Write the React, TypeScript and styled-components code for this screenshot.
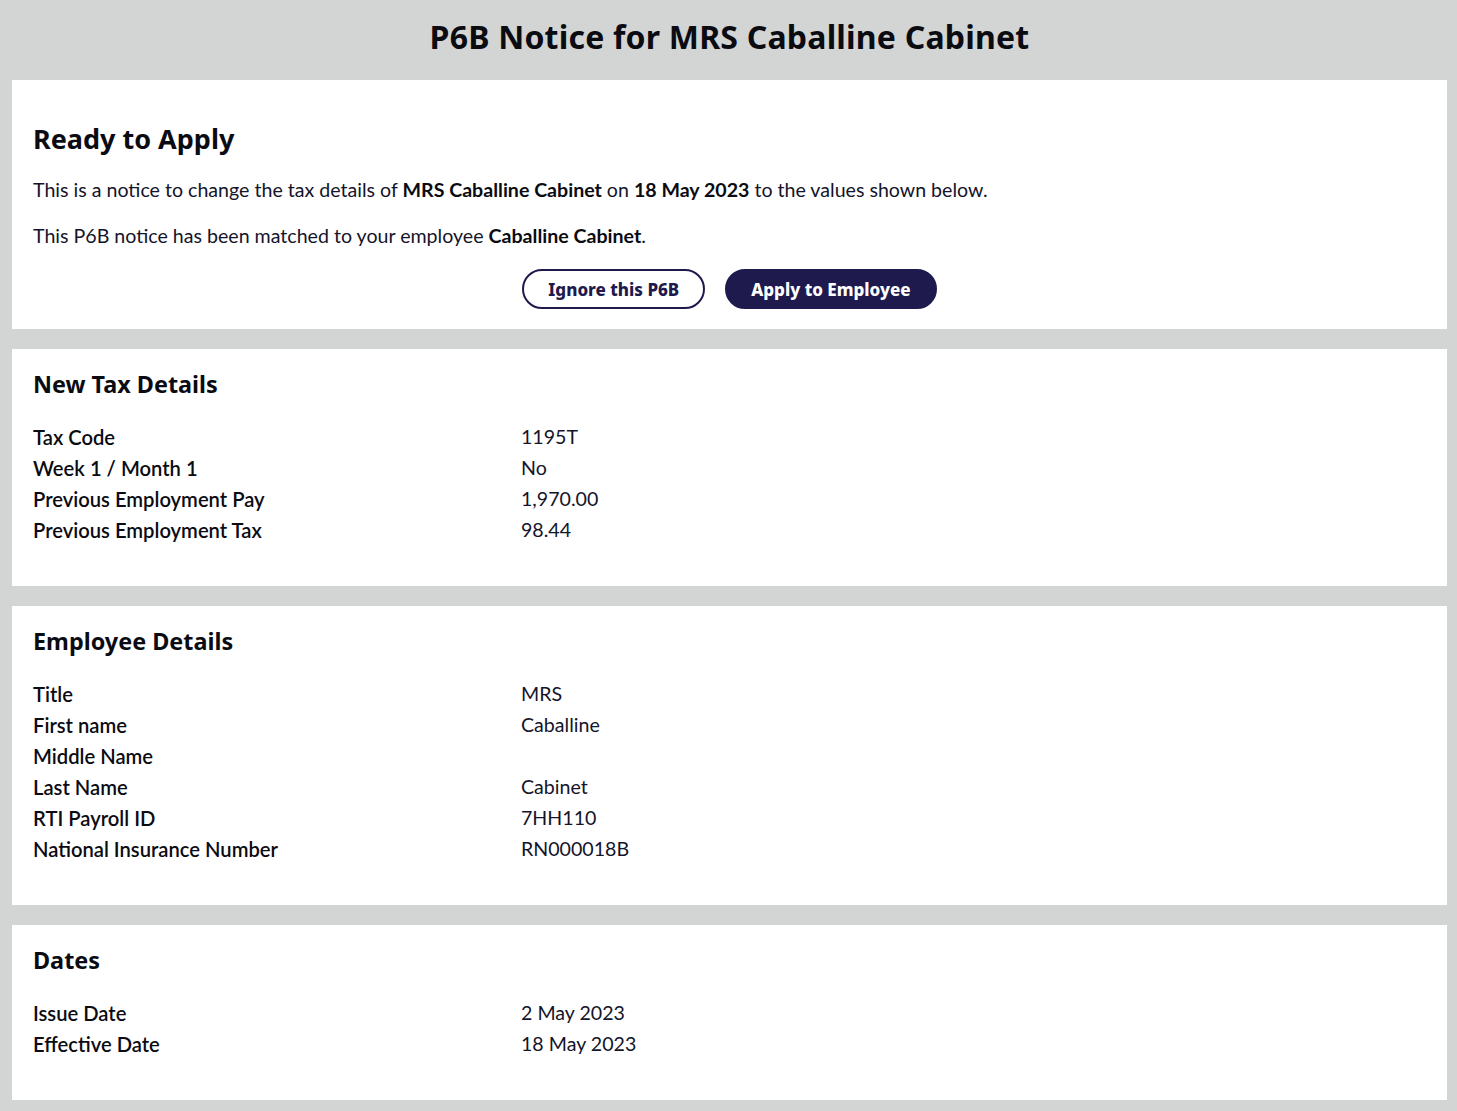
import React from "react";
import styled, { createGlobalStyle } from "styled-components";

const Global = createGlobalStyle`
  html, body { margin: 0; padding: 0; background: #d3d4d4; }
  body { font-family: Lato, "Liberation Sans", sans-serif; color: #111; }
`;

const Page = styled.div`
  padding: 0 10px 12px 12px;
`;

const TitleBar = styled.header`
  height: 80px;
  box-sizing: border-box;
  padding-bottom: 8px;
  display: flex;
  align-items: center;
  justify-content: center;
`;

const Title = styled.h1`
  margin: 0;
  font-family: "Noto Sans", sans-serif;
  font-weight: 700;
  font-size: 32px;
  color: #0b0b12;
  letter-spacing: 0.2px;
`;

const Stack = styled.div`
  display: flex;
  flex-direction: column;
  gap: 20px;
`;

const Card = styled.section<{ $pt: number; $pb: number }>`
  background: #fff;
  padding: ${(p) => p.$pt}px 21px ${(p) => p.$pb}px 21px;
`;

const Heading = styled.h2<{ $size: number }>`
  margin: 0;
  font-family: "Noto Sans", sans-serif;
  font-weight: 700;
  font-size: ${(p) => p.$size}px;
  line-height: 36px;
  color: #0b0b12;
`;

const Para = styled.p`
  margin: 0;
  font-size: 19.6px;
  line-height: 30px;
  color: #14142a;
  & + & { margin-top: 16px; }
  b { font-weight: 700; color: #0b0b12; }
`;

const Actions = styled.div`
  display: flex;
  justify-content: center;
  gap: 20px;
  margin-top: 18px;
`;

const Button = styled.button<{ $primary?: boolean }>`
  height: 40px;
  padding: 0 24px;
  border-radius: 20px;
  border: 2px solid #1e1a4d;
  background: ${(p) => (p.$primary ? "#1e1a4d" : "#fff")};
  color: ${(p) => (p.$primary ? "#fff" : "#1e1a4d")};
  font-family: "Noto Sans", sans-serif;
  font-weight: 800;
  font-size: 17px;
  cursor: pointer;
`;

const Rows = styled.dl`
  margin: 19px 0 0 0;
  display: grid;
  grid-template-columns: 488px 1fr;
  grid-auto-rows: 31px;
  align-items: center;
`;

const Label = styled.dt`
  margin: 0;
  font-size: 20.2px;
  font-weight: 600;
  color: #0b0b12;
`;

const Value = styled.dd`
  margin: 0;
  font-size: 19.6px;
  color: #14142a;
`;

type Row = [string, string];

const DetailCard = ({ title, rows }: { title: string; rows: Row[] }) => (
  <Card $pt={17} $pb={41}>
    <Heading $size={23.4}>{title}</Heading>
    <Rows>
      {rows.map(([l, v]) => (
        <React.Fragment key={l}>
          <Label>{l}</Label>
          <Value>{v}</Value>
        </React.Fragment>
      ))}
    </Rows>
  </Card>
);

export default function App() {
  return (
    <Page>
      <Global />
      <TitleBar>
        <Title>P6B Notice for MRS Caballine Cabinet</Title>
      </TitleBar>
      <Stack>
        <Card $pt={41} $pb={20}>
          <Heading $size={27}>Ready to Apply</Heading>
          <Para style={{ marginTop: 18 }}>
            This is a notice to change the tax details of <b>MRS Caballine Cabinet</b> on <b>18 May 2023</b> to the values shown below.
          </Para>
          <Para>
            This P6B notice has been matched to your employee <b>Caballine Cabinet</b>.
          </Para>
          <Actions>
            <Button>Ignore this P6B</Button>
            <Button $primary>Apply to Employee</Button>
          </Actions>
        </Card>
        <DetailCard
          title="New Tax Details"
          rows={[
            ["Tax Code", "1195T"],
            ["Week 1 / Month 1", "No"],
            ["Previous Employment Pay", "1,970.00"],
            ["Previous Employment Tax", "98.44"],
          ]}
        />
        <DetailCard
          title="Employee Details"
          rows={[
            ["Title", "MRS"],
            ["First name", "Caballine"],
            ["Middle Name", ""],
            ["Last Name", "Cabinet"],
            ["RTI Payroll ID", "7HH110"],
            ["National Insurance Number", "RN000018B"],
          ]}
        />
        <DetailCard
          title="Dates"
          rows={[
            ["Issue Date", "2 May 2023"],
            ["Effective Date", "18 May 2023"],
          ]}
        />
      </Stack>
    </Page>
  );
}
